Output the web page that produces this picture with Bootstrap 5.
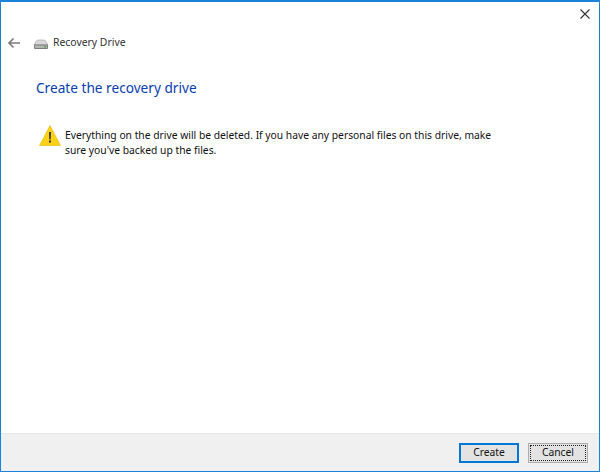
<!DOCTYPE html>
<html lang="en">
<head>
<meta charset="utf-8">
<title>Recovery Drive</title>
<link href="https://cdn.jsdelivr.net/npm/bootstrap@5.3.0/dist/css/bootstrap.min.css" rel="stylesheet">
<style>
html,body{height:100%;margin:0;}
body{font-family:"Noto Sans","Open Sans","Liberation Sans",sans-serif;color:#1a1a1a;background:#fff;}
.wiz-frame{width:600px;height:472px;border:1px solid #1883d7;border-top-width:2px;display:flex;flex-direction:column;overflow:hidden;}
.wiz-close{height:29px;padding:7px 9px 0 0;}
.wiz-head{height:24px;padding-left:6px;font-size:10.4px;color:#333;}
.wiz-drive{margin:3px 0 0 12px;}
.wiz-title{margin:21px 0 0 35px;font-size:13.65px;line-height:24px;color:#0a3eb0;font-weight:400;}
.wiz-warn{margin:25px 0 0 38px;width:470px;}
.wiz-warn p{font-size:10.3px;line-height:14.6px;color:#111;margin:3px 0 0 4px;}
.wiz-foot{height:38px;margin-top:auto;background:#f0f0f0;border-top:1px solid #e6e6e6;padding:0 11px 0 0;column-gap:9px;}
.wiz-btn{width:60px;height:20px;padding:0 0 1px;font-size:10.3px;line-height:15px;color:#111;border-radius:0;background:#e3e3e3;border:1px solid #adadad;}
.wiz-primary{border:2px solid #0078d7;background:#e3e3e3;}
.wiz-focus{outline:1px dotted #222;outline-offset:-3px;}
</style>
</head>
<body>
<div class="wiz-frame">
  <div class="wiz-close d-flex justify-content-end">
    <svg width="10" height="10" viewBox="0 0 10 10"><path d="M.5.500l9 9M9.500.500l-9 9" stroke="#333" stroke-width="1.1" fill="none"/></svg>
  </div>
  <div class="wiz-head d-flex align-items-center">
    <svg width="14" height="12" viewBox="0 0 14 12"><path d="M13 6H2M6.500 1.500 2 6l4.500 4.500" stroke="#7a7a7a" stroke-width="1.600" fill="none"/></svg>
    <svg class="wiz-drive" width="16" height="11" viewBox="0 0 16 11">
      <path d="M3 2.500Q3.500 1 5.500 1H10.500Q12.500 1 13 2.500L15 6H1Z" fill="#d8d8d8" stroke="#9a9a9a" stroke-width=".6"/>
      <rect x="1" y="5.500" width="14" height="4.500" rx="1" fill="#7d7d7d"/>
      <rect x="2" y="6.500" width="12" height="2.500" fill="#b5b5b5"/>
      <rect x="11" y="7" width="2" height="1.500" fill="#4caf3c"/>
    </svg>
    <span class="ms-1">Recovery Drive</span>
  </div>
  <h1 class="wiz-title">Create the recovery drive</h1>
  <div class="wiz-warn d-flex align-items-start">
    <svg class="flex-shrink-0" width="22" height="21" viewBox="0 0 22 21">
      <path d="M11 .5 21.500 20.500H.5Z" fill="#fcd116" stroke="#e6b800" stroke-width=".6"/>
      <path d="M10 7h2l-.3 7.500h-1.400Z" fill="#333"/><rect x="10" y="15.500" width="2" height="2" fill="#333"/>
    </svg>
    <p>Everything on the drive will be deleted. If you have any personal files on this drive, make sure you've backed up the files.</p>
  </div>
  <div class="wiz-foot d-flex align-items-center justify-content-end">
    <button type="button" class="btn wiz-btn wiz-primary">Create</button>
    <button type="button" class="btn wiz-btn wiz-focus">Cancel</button>
  </div>
</div>
</body>
</html>
